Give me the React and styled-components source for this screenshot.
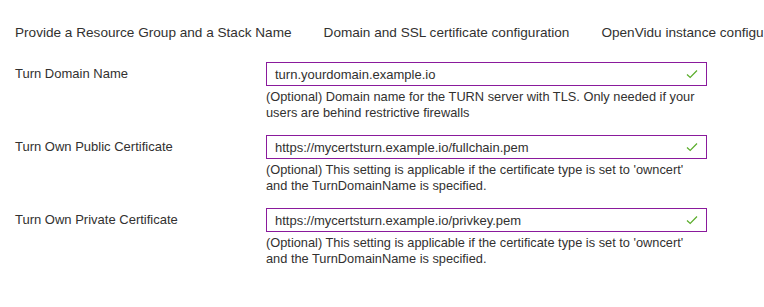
import React from 'react'
import styled, { createGlobalStyle } from 'styled-components'

const GlobalStyle = createGlobalStyle`
  body {
    margin: 0;
    background: #fff;
    font-family: "Segoe UI", "Liberation Sans", Arial, sans-serif;
    color: #323130;
    overflow: hidden;
  }
`

const Page = styled.div`
  width: 764px;
  height: 307px;
  overflow: hidden;
`

const Tabs = styled.nav`
  display: flex;
  gap: 32px;
  padding: 24px 0 0 15px;
  height: 38px;
  white-space: nowrap;
  box-sizing: border-box;
  font-size: 13.6px;
  line-height: 18px;
`

const Tab = styled.span`
  color: #323130;
`

const Form = styled.div`
  display: flex;
  flex-direction: column;
  gap: 14px;
  padding: 24px 0 0 15px;
`

const Row = styled.div`
  display: grid;
  grid-template-columns: 251px 441px;
`

const Label = styled.label`
  font-size: 13px;
  line-height: 24px;
`

const Field = styled.div`
  display: flex;
  flex-direction: column;
  gap: 3px;
`

const InputBox = styled.div`
  display: flex;
  align-items: center;
  height: 24px;
  border: 1px solid #8a1a9c;
  padding: 0 8px;
  box-sizing: border-box;
`

const Value = styled.span`
  flex: 1;
  font-size: 13px;
  color: #323130;
`

const Help = styled.div`
  font-size: 12.8px;
  line-height: 16px;
  color: #323130;
`

const Check = () => (
  <svg width="12" height="10" viewBox="0 0 12 10">
    <path d="M1 5.5 L4.2 8.5 L11 1.5" fill="none" stroke="#5aad2a" strokeWidth="1.2" />
  </svg>
)

const fields = [
  {
    label: 'Turn Domain Name',
    value: 'turn.yourdomain.example.io',
    help: '(Optional) Domain name for the TURN server with TLS. Only needed if your users are behind restrictive firewalls',
  },
  {
    label: 'Turn Own Public Certificate',
    value: 'https://mycertsturn.example.io/fullchain.pem',
    help: "(Optional) This setting is applicable if the certificate type is set to 'owncert' and the TurnDomainName is specified.",
  },
  {
    label: 'Turn Own Private Certificate',
    value: 'https://mycertsturn.example.io/privkey.pem',
    help: "(Optional) This setting is applicable if the certificate type is set to 'owncert' and the TurnDomainName is specified.",
  },
]

export default function App() {
  return (
    <Page>
      <GlobalStyle />
      <Tabs>
        <Tab>Provide a Resource Group and a Stack Name</Tab>
        <Tab>Domain and SSL certificate configuration</Tab>
        <Tab>OpenVidu instance configuration</Tab>
      </Tabs>
      <Form>
        {fields.map(f => (
          <Row key={f.label}>
            <Label>{f.label}</Label>
            <Field>
              <InputBox>
                <Value>{f.value}</Value>
                <Check />
              </InputBox>
              <Help>{f.help}</Help>
            </Field>
          </Row>
        ))}
      </Form>
    </Page>
  )
}
